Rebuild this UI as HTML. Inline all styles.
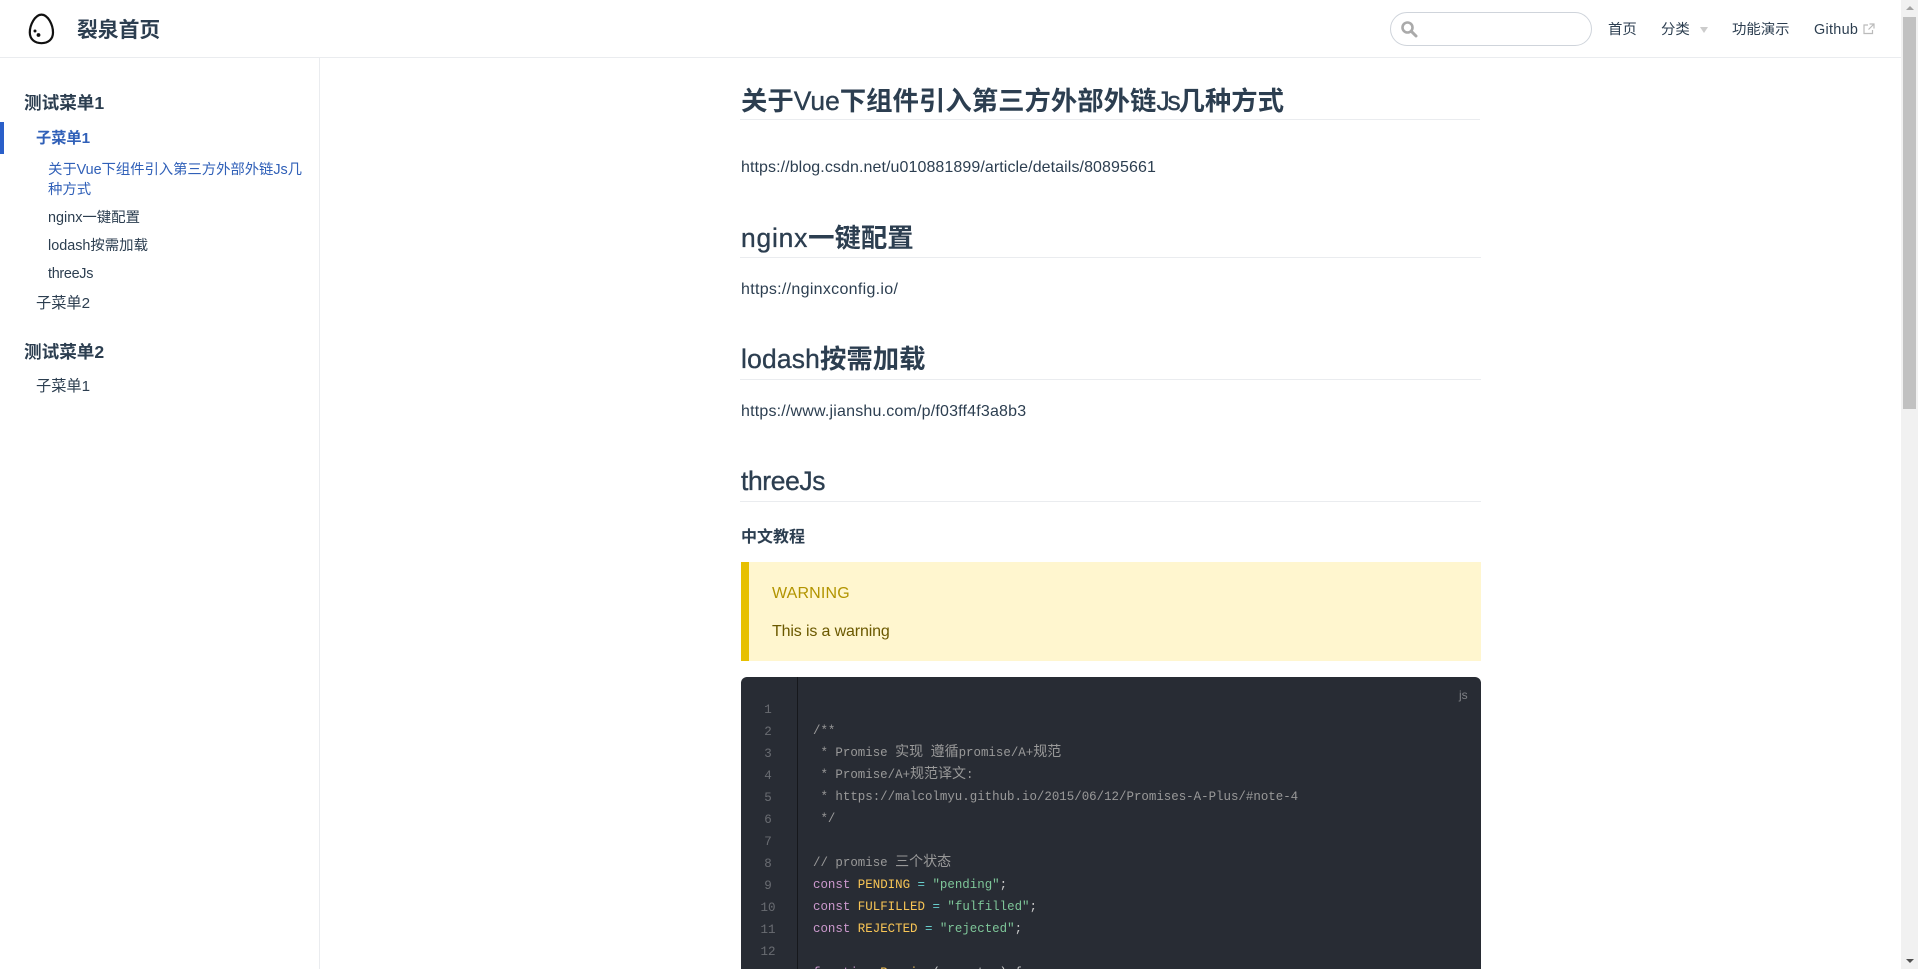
<!DOCTYPE html>
<html lang="zh">
<head>
<meta charset="utf-8">
<title>裂泉首页</title>
<style>
html,body{margin:0;padding:0;width:1918px;height:969px;overflow:hidden;background:#fff}
body{position:relative;font-family:"Liberation Sans","Noto Sans CJK SC",sans-serif;color:#2c3e50;font-size:16px}
.t{position:absolute;white-space:nowrap;line-height:24px;height:24px}
.box{position:absolute}
.h1{font-size:26.4px;font-weight:700;line-height:36px;height:36px}
.h1 i{font-style:normal;font-weight:400;-webkit-text-stroke:.35px #2c3e50}
.g{font-size:17.6px;font-weight:700}
.s{font-size:15.2px;letter-spacing:0}
.ss{font-size:14.4px}
.blue{color:#3060b8}
.n{font-size:14.4px}
.code{position:absolute;font-family:"Liberation Mono","Noto Sans CJK SC",monospace;font-size:12.45px;line-height:22px;height:22px;white-space:pre;color:#ccc;left:813px}
.code b{font-weight:400;font-size:14px}
.ln{position:absolute;font-family:"Liberation Mono",monospace;font-size:12.5px;line-height:22px;height:22px;width:40px;left:748px;text-align:center;color:rgba(255,255,255,.3)}
.cm{color:#999}.kw{color:#cc99cd}.cn{color:#f8c555}.op{color:#67cdcc}.st{color:#7ec699}
</style>
</head>
<body>
<!-- header -->
<div class="box" style="left:0;top:0;width:1901px;height:57px;background:#fff;border-bottom:1px solid #eaecef"></div>
<svg class="box" style="left:26px;top:12px" width="32" height="34" viewBox="0 0 32 34">
<path d="M15.500 2.600C9 2.600 3.800 13 3.800 20.500C3.800 27.500 9 31.200 15.500 31.200C22 31.200 27 27.500 27 20.500C27 13 22 2.600 15.500 2.600Z" fill="none" stroke="#111" stroke-width="2.200"/>
<circle cx="9" cy="19" r="1.500" fill="#111"/><circle cx="12.500" cy="23" r="1.900" fill="#111"/>
</svg>
<div class="t" style="left:77px;top:19px;font-size:20.8px;font-weight:700">裂泉首页</div>

<div class="box" style="left:1390px;top:12px;width:200px;height:32px;border:1px solid #cfd4db;border-radius:17px"></div>
<svg class="box" style="left:1400px;top:20px" width="18" height="18" viewBox="0 0 18 18">
<circle cx="7.500" cy="7.500" r="5" fill="none" stroke="#aaa" stroke-width="2.600"/>
<path d="M11.300 11.300L16 16" stroke="#aaa" stroke-width="3" stroke-linecap="round"/>
</svg>
<div class="t n" style="left:1608px;top:18px">首页</div>
<div class="t n" style="left:1661px;top:18px">分类</div>
<div class="box" style="left:1700px;top:27px;width:0;height:0;border-left:4px solid transparent;border-right:4px solid transparent;border-top:6px solid #ccc"></div>
<div class="t n" style="left:1732px;top:18px">功能演示</div>
<div class="t n" style="left:1814px;top:18px;letter-spacing:.3px">Github</div>
<svg class="box" style="left:1863px;top:23px" width="12" height="12" viewBox="0 0 12 12">
<path d="M9.500 7v3.500h-8.500v-8.500H5" fill="none" stroke="#bbb" stroke-width="1.200"/>
<path d="M6.500 1h4.500v4.500M11 1L5.500 6.500" fill="none" stroke="#bbb" stroke-width="1.200"/>
</svg>

<!-- sidebar -->
<div class="box" style="left:319px;top:58px;width:1px;height:911px;background:#eaecef"></div>
<div class="t g" style="left:24px;top:91px">测试菜单1</div>
<div class="box" style="left:0;top:122px;width:4px;height:32px;background:#2a5fc9"></div>
<div class="t s blue" style="left:36px;top:125px;font-weight:700;margin-top:1.500px">子菜单1</div>
<div class="t ss blue" style="left:48px;top:158px;letter-spacing:-.07px">关于Vue下组件引入第三方外部外链Js几</div>
<div class="t ss blue" style="left:48px;top:178px">种方式</div>
<div class="t ss" style="left:48px;top:206px">nginx一键配置</div>
<div class="t ss" style="left:48px;top:234px">lodash按需加载</div>
<div class="t ss" style="left:48px;top:262px;letter-spacing:-.3px">threeJs</div>
<div class="t s" style="left:36px;top:292px">子菜单2</div>
<div class="t g" style="left:24px;top:340px">测试菜单2</div>
<div class="t s" style="left:36px;top:375px">子菜单1</div>

<!-- content -->
<div class="t h1" style="left:741px;top:83px">关于<i>Vue</i>下组件引入第三方外部外链<i style="letter-spacing:-2.200px">Js</i>几种方式</div>
<div class="box" style="left:740px;top:119px;width:740px;height:1px;background:#eaecef"></div>
<div class="t" style="left:741px;top:156px;letter-spacing:.085px">https://blog.csdn.net/u010881899/article/details/80895661</div>
<div class="t h1" style="left:741px;top:220px"><i style="letter-spacing:.8px">nginx</i>一键配置</div>
<div class="box" style="left:740px;top:257px;width:741px;height:1px;background:#eaecef"></div>
<div class="t" style="left:741px;top:278px;letter-spacing:.3px">https://nginxconfig.io/</div>
<div class="t h1" style="left:741px;top:341px"><i style="letter-spacing:.2px">lodash</i>按需加载</div>
<div class="box" style="left:740px;top:379px;width:741px;height:1px;background:#eaecef"></div>
<div class="t" style="left:741px;top:400px;letter-spacing:.19px">https://www.jianshu.com/p/f03ff4f3a8b3</div>
<div class="t h1" style="left:741px;top:463px"><i style="letter-spacing:-.35px">threeJs</i></div>
<div class="box" style="left:740px;top:501px;width:741px;height:1px;background:#eaecef"></div>
<div class="t" style="left:741px;top:526px;font-weight:700">中文教程</div>

<div class="box" style="left:741px;top:562px;width:740px;height:99px;background:#fff6cf"></div>
<div class="box" style="left:741px;top:562px;width:8px;height:99px;background:#e7c000"></div>
<div class="t" style="left:772px;top:582px;color:#b29400;letter-spacing:.15px">WARNING</div>
<div class="t" style="left:772px;top:620px;color:#6b5900;letter-spacing:-.14px">This is a warning</div>

<!-- code block -->
<div class="box" style="left:741px;top:677px;width:740px;height:300px;background:#282c34;border-radius:6px 6px 0 0"></div>
<div class="box" style="left:797px;top:677px;width:1px;height:292px;background:#16181c"></div>
<div class="t" style="left:1459px;top:683px;font-size:12px;color:rgba(255,255,255,.4)">js</div>
<div class="ln" style="top:699px">1</div>
<div class="ln" style="top:721px">2</div>
<div class="ln" style="top:743px">3</div>
<div class="ln" style="top:765px">4</div>
<div class="ln" style="top:787px">5</div>
<div class="ln" style="top:809px">6</div>
<div class="ln" style="top:831px">7</div>
<div class="ln" style="top:853px">8</div>
<div class="ln" style="top:875px">9</div>
<div class="ln" style="top:897px">10</div>
<div class="ln" style="top:919px">11</div>
<div class="ln" style="top:941px">12</div>
<div class="code cm" style="top:720px">/**</div>
<div class="code cm" style="top:742px"> * Promise <b>实现</b> <b>遵循</b>promise/A+<b>规范</b></div>
<div class="code cm" style="top:764px"> * Promise/A+<b>规范译文</b>:</div>
<div class="code cm" style="top:786px"> * https://malcolmyu.github.io/2015/06/12/Promises-A-Plus/#note-4</div>
<div class="code cm" style="top:808px"> */</div>
<div class="code cm" style="top:852px">// promise <b>三个状态</b></div>
<div class="code" style="top:874px"><span class="kw">const</span> <span class="cn">PENDING</span> <span class="op">=</span> <span class="st">"pending"</span>;</div>
<div class="code" style="top:896px"><span class="kw">const</span> <span class="cn">FULFILLED</span> <span class="op">=</span> <span class="st">"fulfilled"</span>;</div>
<div class="code" style="top:918px"><span class="kw">const</span> <span class="cn">REJECTED</span> <span class="op">=</span> <span class="st">"rejected"</span>;</div>
<div class="code" style="top:962px"><span class="kw">function</span> <span class="cn">Promise</span>(executor) {</div>

<!-- scrollbar -->
<div class="box" style="left:1901px;top:0;width:17px;height:969px;background:#f1f1f1"></div>
<div class="box" style="left:1903px;top:17px;width:13px;height:392px;background:#c1c1c1"></div>
<div class="box" style="left:1906px;top:6px;width:0;height:0;border-left:4px solid transparent;border-right:4px solid transparent;border-bottom:4px solid #a3a3a3"></div>
<div class="box" style="left:1906px;top:959px;width:0;height:0;border-left:4px solid transparent;border-right:4px solid transparent;border-top:4px solid #505050"></div>
</body>
</html>
